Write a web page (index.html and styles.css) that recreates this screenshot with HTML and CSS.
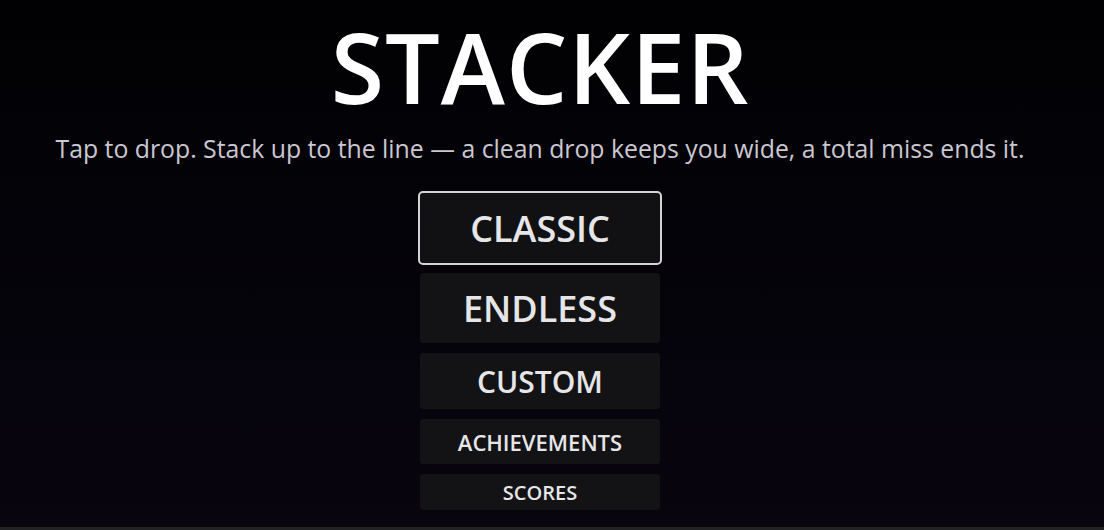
FILE: index.html
```html
<!DOCTYPE html>
<html lang="en">
<head>
<meta charset="utf-8">
<title>Stacker</title>
<link rel="stylesheet" href="styles.css">
</head>
<body>
<div class="page">
  <main class="menu">
    <h1 class="title">STACKER</h1>
    <p class="tagline">Tap to drop. Stack up to the line — a clean drop keeps you wide, a total miss ends it.</p>
    <nav class="buttons">
      <button class="btn btn-xl is-selected">CLASSIC</button>
      <button class="btn btn-xl">ENDLESS</button>
      <button class="btn btn-lg">CUSTOM</button>
      <button class="btn btn-md">ACHIEVEMENTS</button>
      <button class="btn btn-sm">SCORES</button>
    </nav>
  </main>
  <div class="bottom-bar"></div>
</div>
</body>
</html>
```

FILE: styles.css
```css
html, body {
  margin: 0;
  padding: 0;
  height: 100%;
}
body {
  background: linear-gradient(to bottom, #010103 0%, #08050f 100%);
  font-family: "Open Sans", "Noto Sans", "Liberation Sans", sans-serif;
  overflow: hidden;
}
.page {
  height: 530px;
  display: flex;
  flex-direction: column;
}
.menu {
  flex: 1;
  width: 1080px;
  display: flex;
  flex-direction: column;
  align-items: center;
}
.title {
  margin: 0;
  font-size: 97px;
  font-weight: 600;
  line-height: normal;
  color: #ffffff;
  letter-spacing: 1px;
}
.tagline {
  margin: 0;
  font-size: 24.8px;
  font-weight: 500;
  line-height: 32px;
  color: #cac8d2;
  white-space: nowrap;
}
.buttons {
  margin-top: 27px;
  display: flex;
  flex-direction: column;
  align-items: center;
  gap: 6px;
}
.btn {
  width: 244px;
  box-sizing: border-box;
  border: 2px solid transparent;
  border-radius: 5px;
  background: #131315;
  background-clip: padding-box;
  color: #e6e6e8;
  font-family: inherit;
  font-weight: 600;
  line-height: normal;
  padding: 0;
  display: flex;
  align-items: center;
  justify-content: center;
}
.btn.is-selected {
  border-color: #d4d4d6;
  background: #111113;
  background-clip: padding-box;
}
.btn-xl {
  height: 74px;
  font-size: 36px;
}
.btn-lg {
  height: 60px;
  font-size: 30px;
}
.btn-md {
  height: 49px;
  font-size: 22px;
}
.btn-sm {
  height: 40px;
  font-size: 20px;
}
.bottom-bar {
  height: 3px;
  background: #222225;
}
```
